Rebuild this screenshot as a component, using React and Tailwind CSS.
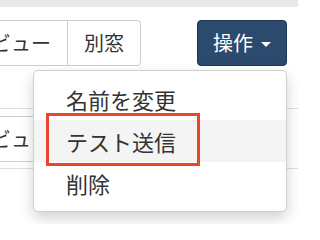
import React from 'react'

const font = { fontFamily: '"Noto Sans CJK JP", "Noto Sans", sans-serif' }

function ButtonGroup() {
  return (
    <div className="flex ml-[-26px]">
      <button className="h-[46px] px-4 border border-[#cccccc] bg-white text-[20px] text-[#333333] flex items-center">
        ビュー
      </button>
      <button className="h-[46px] px-4 -ml-px border border-[#cccccc] rounded-r-[4px] bg-white text-[20px] text-[#333333] flex items-center">
        別窓
      </button>
    </div>
  )
}

function ActionButton() {
  return (
    <button className="h-[46px] w-[90px] flex items-center justify-center gap-2 rounded-[4px] border border-[#1f3756] bg-[#2c4a6d] text-white text-[20px]">
      <span>操作</span>
      <span className="w-0 h-0 border-t-[5px] border-t-white border-x-[5px] border-x-transparent mt-[2px]" />
    </button>
  )
}

export default function App() {
  const items = ['名前を変更', 'テスト送信', '削除']
  return (
    <div className="relative w-[298px] h-[224px] overflow-hidden bg-white" style={font}>
      <div className="h-[7px] bg-[#e7e7e7]" />
      <div className="h-[102px] flex items-start justify-between pt-[13px] pr-[11px] border-b border-[#dddddd]">
        <ButtonGroup />
        <ActionButton />
      </div>
      <div className="h-[60px] flex items-center justify-between pr-[11px] border-b border-[#dddddd]">
        <ButtonGroup />
        <ActionButton />
      </div>

      {/* dropdown */}
      <ul className="absolute left-[33px] top-[70px] w-[254px] h-[142px] py-[7px] bg-white border border-[#d0d0d0] rounded-[5px] shadow-[0_6px_14px_rgba(0,0,0,0.18)]">
        {items.map((item, i) => (
          <li
            key={item}
            className={`h-[42px] leading-[42px] pl-[32px] text-[22px] text-[#333333] ${i === 1 ? 'bg-[#f4f4f4]' : ''}`}
          >
            {item}
          </li>
        ))}
      </ul>

      <div className="absolute left-[46px] top-[113px] w-[154px] h-[53px] border-[3px] border-[#e8472e]" />
    </div>
  )
}
